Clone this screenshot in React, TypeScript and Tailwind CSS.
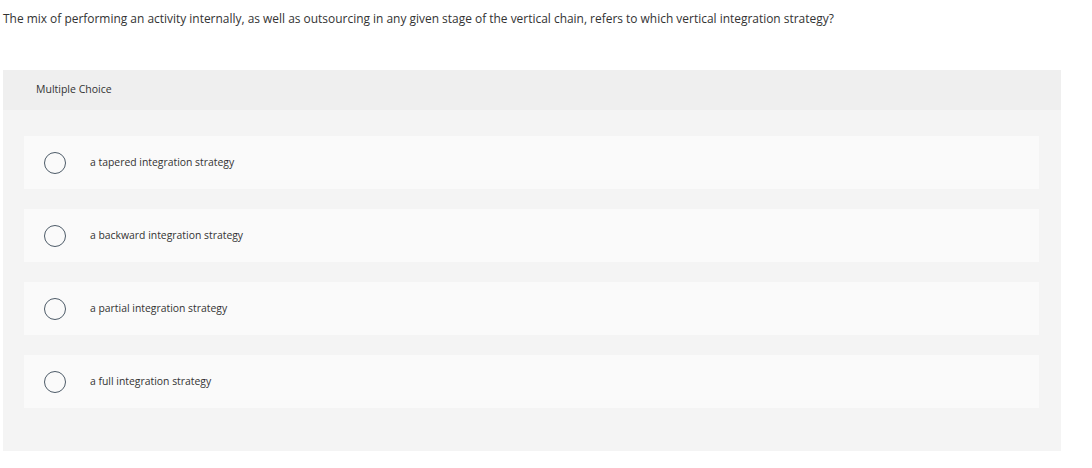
const options = [
  "a tapered integration strategy",
  "a backward integration strategy",
  "a partial integration strategy",
  "a full integration strategy",
];

export default function App() {
  return (
    <div className="h-[468px] w-[1092px] bg-white font-['Open_Sans','Liberation_Sans',sans-serif] text-[#333]">
      {/* Question prompt */}
      <p className="px-[3px] pt-[11px] text-[11.95px] leading-[16px]">
        The mix of performing an activity internally, as well as outsourcing in any given stage of the vertical chain,
        refers to which vertical integration strategy?
      </p>

      {/* Answer panel */}
      <div className="ml-[3px] mt-[43px] w-[1058px] bg-[#f4f4f4] pb-[43px]">
        <div className="flex h-[40px] items-center bg-[#efefef] pl-[33px] text-[10.5px]">Multiple Choice</div>

        <div className="flex flex-col gap-[20px] pl-[21px] pr-[22px] pt-[26px]">
          {options.map((opt) => (
            <label key={opt} className="flex h-[53px] items-center bg-[#fafafa]">
              <span className="ml-[20px] h-[22px] w-[22px] rounded-full border border-[#4d5b68]" />
              <span className="ml-[24px] text-[10.4px]">{opt}</span>
            </label>
          ))}
        </div>
      </div>
    </div>
  );
}
